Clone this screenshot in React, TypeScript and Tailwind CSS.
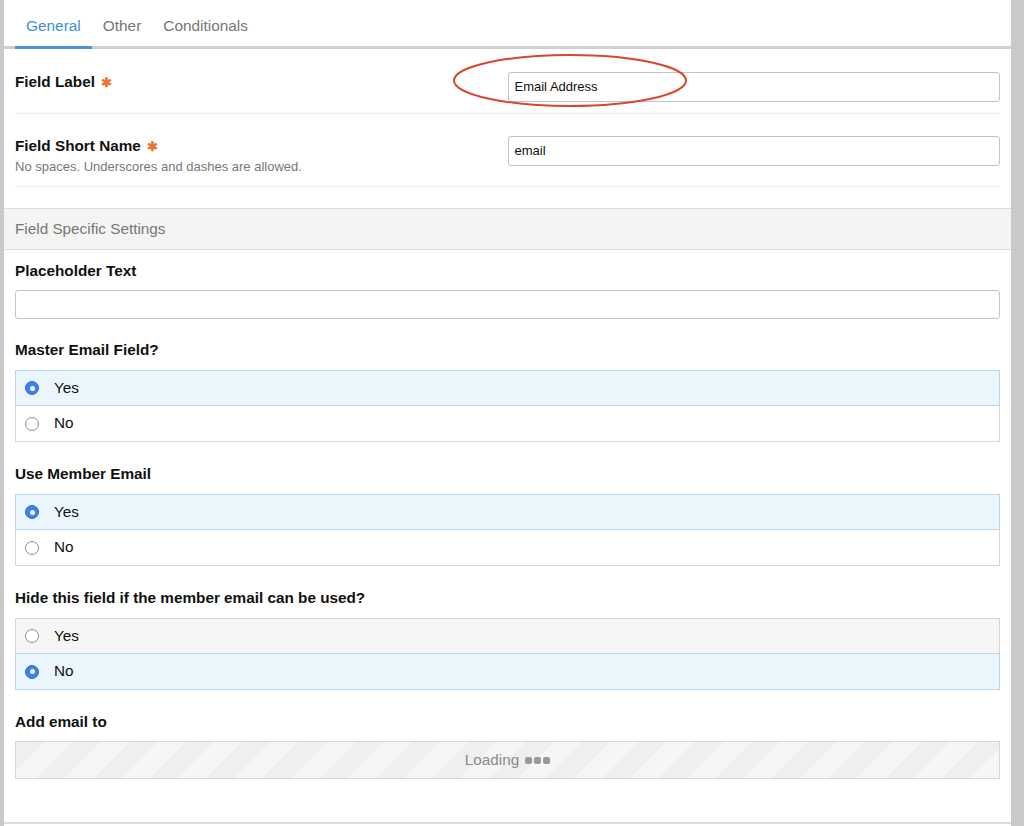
import React from 'react';

type Option = { label: string; checked: boolean };

function Radio({ checked }: { checked: boolean }) {
  if (checked) {
    return (
      <span className="flex h-[14px] w-[14px] items-center justify-center rounded-full bg-[#3b7ef5] border border-[#2f6fe0]">
        <span className="h-[5px] w-[5px] rounded-full bg-white" />
      </span>
    );
  }
  return <span className="h-[14px] w-[14px] rounded-full border border-[#8c8c8c] bg-white" />;
}

function RadioGroup({ options, plainBg = 'bg-white' }: { options: Option[]; plainBg?: string }) {
  return (
    <div className="flex flex-col">
      {options.map((o, i) => (
        <div
          key={o.label}
          className={`flex items-center gap-[15px] pl-[9px] border ${
            o.checked ? 'bg-[#ebf5fc] border-[#b8d7ee] z-10' : `${plainBg} border-[#d6d6d6]`
          } ${i > 0 ? '-mt-px h-[37px]' : 'h-[36px]'}`}
        >
          <Radio checked={o.checked} />
          <span className="text-[15.3px] text-[#111]">{o.label}</span>
        </div>
      ))}
    </div>
  );
}

function Label({ children, required }: { children: React.ReactNode; required?: boolean }) {
  return (
    <div className="flex items-center gap-[6px] text-[15.3px] font-bold text-[#111] leading-[20px]">
      {children}
      {required && <span className="text-[#e8742e] text-[13px] leading-none">✱</span>}
    </div>
  );
}

export default function App() {
  return (
    <div className="flex w-[1024px] h-[826px] bg-white font-['Liberation_Sans',Arial,sans-serif] overflow-hidden">
      <div className="w-[4px] bg-[#c9c9c9]" />
      <div className="relative flex-1 flex flex-col border-b-2 border-[#dcdcdc] h-[824px]">
        {/* Tabs */}
        <div className="flex h-[49px] items-start border-b-[3px] border-[#cfcfcf] pl-[11px]">
          <div className="relative flex h-[46px] items-center pt-[5px] px-[11px] text-[15.4px] text-[#3d8fd8]">
            General
            <span className="absolute left-0 right-0 -bottom-[3px] h-[3px] bg-[#4a94dc]" />
          </div>
          <div className="flex h-[46px] items-center pt-[5px] px-[11px] text-[15.4px] text-[#777]">Other</div>
          <div className="flex h-[46px] items-center pt-[5px] px-[11px] text-[15.4px] text-[#777]">Conditionals</div>
        </div>

        <div className="px-[11px]">
          {/* Field Label */}
          <div className="grid grid-cols-2 pt-[23px] pb-[11px] border-b border-[#ededed]">
            <div>
              <Label required>Field Label</Label>
            </div>
            <div className="h-[30px] border border-[#c4c4c4] rounded-[3px] flex items-center px-[6px] text-[13px] text-[#111]">
              Email Address
            </div>
          </div>

          {/* Field Short Name */}
          <div className="grid grid-cols-2 pt-[22px] pb-[10px] border-b border-[#ededed]">
            <div>
              <Label required>Field Short Name</Label>
              <div className="text-[13px] text-[#777] mt-[2px] leading-[18px]">No spaces. Underscores and dashes are allowed.</div>
            </div>
            <div className="h-[30px] border border-[#c4c4c4] rounded-[3px] flex items-center px-[6px] text-[13px] text-[#111]">
              email
            </div>
          </div>
        </div>

        {/* Section header */}
        <div className="mt-[21px] h-[42px] bg-[#f4f4f4] border-y border-[#dcdcdc] flex items-center px-[11px] text-[15.3px] text-[#777]">
          Field Specific Settings
        </div>

        <div className="px-[11px] flex flex-col">
          <div className="mt-[11px]">
            <Label>Placeholder Text</Label>
          </div>
          <div className="mt-[9px] h-[29px] border border-[#c4c4c4] rounded-[3px]" />

          <div className="mt-[21px]">
            <Label>Master Email Field?</Label>
          </div>
          <div className="mt-[10px]">
            <RadioGroup options={[{ label: 'Yes', checked: true }, { label: 'No', checked: false }]} />
          </div>

          <div className="mt-[22px]">
            <Label>Use Member Email</Label>
          </div>
          <div className="mt-[10px]">
            <RadioGroup options={[{ label: 'Yes', checked: true }, { label: 'No', checked: false }]} />
          </div>

          <div className="mt-[22px]">
            <Label>Hide this field if the member email can be used?</Label>
          </div>
          <div className="mt-[10px]">
            <RadioGroup
              plainBg="bg-[#f6f6f6]"
              options={[{ label: 'Yes', checked: false }, { label: 'No', checked: true }]}
            />
          </div>

          <div className="mt-[22px]">
            <Label>Add email to</Label>
          </div>
          <div className="mt-[9px] h-[38px] border border-[#d6d6d6] flex items-center justify-center gap-[6px] text-[15.3px] text-[#8a8a8a] bg-[repeating-linear-gradient(135deg,#efefef_0px,#efefef_20px,#f6f6f6_20px,#f6f6f6_40px)]">
            <span>Loading</span>
            <span className="flex gap-[2px]">
              <span className="h-[7px] w-[7px] rounded-[2px] bg-[#999]" />
              <span className="h-[7px] w-[7px] rounded-[2px] bg-[#999]" />
              <span className="h-[7px] w-[7px] rounded-[2px] bg-[#999]" />
            </span>
          </div>
        </div>

        {/* Annotation ellipse */}
        <svg className="absolute left-[448px] top-[53px]" width="238" height="56" viewBox="0 0 238 56">
          <ellipse cx="118" cy="27.5" rx="116" ry="25.5" fill="none" stroke="#d8472c" strokeWidth="2" />
        </svg>
      </div>
      <div className="w-[13px] bg-[#c9c9c9]" />
    </div>
  );
}
